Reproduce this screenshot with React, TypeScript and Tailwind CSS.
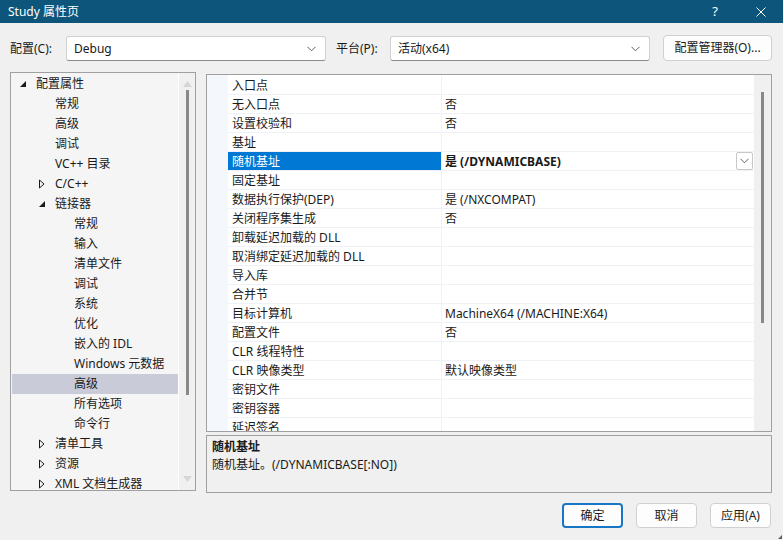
import React from "react";

const FONT = '"Noto Sans", "Noto Sans CJK SC", sans-serif';

type TreeItem = { label: string; level: number; arrow?: "open" | "closed"; selected?: boolean };

const tree: TreeItem[] = [
  { label: "配置属性", level: 0, arrow: "open" },
  { label: "常规", level: 1 },
  { label: "高级", level: 1 },
  { label: "调试", level: 1 },
  { label: "VC++ 目录", level: 1 },
  { label: "C/C++", level: 1, arrow: "closed" },
  { label: "链接器", level: 1, arrow: "open" },
  { label: "常规", level: 2 },
  { label: "输入", level: 2 },
  { label: "清单文件", level: 2 },
  { label: "调试", level: 2 },
  { label: "系统", level: 2 },
  { label: "优化", level: 2 },
  { label: "嵌入的 IDL", level: 2 },
  { label: "Windows 元数据", level: 2 },
  { label: "高级", level: 2, selected: true },
  { label: "所有选项", level: 2 },
  { label: "命令行", level: 2 },
  { label: "清单工具", level: 1, arrow: "closed" },
  { label: "资源", level: 1, arrow: "closed" },
  { label: "XML 文档生成器", level: 1, arrow: "closed" },
];

const rows: [string, string][] = [
  ["入口点", ""],
  ["无入口点", "否"],
  ["设置校验和", "否"],
  ["基址", ""],
  ["随机基址", "是 (/DYNAMICBASE)"],
  ["固定基址", ""],
  ["数据执行保护(DEP)", "是 (/NXCOMPAT)"],
  ["关闭程序集生成", "否"],
  ["卸载延迟加载的 DLL", ""],
  ["取消绑定延迟加载的 DLL", ""],
  ["导入库", ""],
  ["合并节", ""],
  ["目标计算机", "MachineX64 (/MACHINE:X64)"],
  ["配置文件", "否"],
  ["CLR 线程特性", ""],
  ["CLR 映像类型", "默认映像类型"],
  ["密钥文件", ""],
  ["密钥容器", ""],
  ["延迟签名", ""],
];

function Chevron({ className = "" }: { className?: string }) {
  return (
    <svg width="9" height="6" viewBox="0 0 9 6" className={className}>
      <path d="M0.5 0.8 L4.5 4.8 L8.5 0.8" fill="none" stroke="#606060" strokeWidth="1" />
    </svg>
  );
}

function Arrow({ type }: { type?: "open" | "closed" }) {
  if (type === "open")
    return (
      <svg width="6" height="6" viewBox="0 0 6 6">
        <polygon points="6,0 6,6 0,6" fill="#1a1a1a" />
      </svg>
    );
  if (type === "closed")
    return (
      <svg width="6" height="10" viewBox="0 0 6 10">
        <polygon points="0.5,1 5,5 0.5,9" fill="none" stroke="#1a1a1a" strokeWidth="1" />
      </svg>
    );
  return null;
}

function Combo({ text, width }: { text: string; width: string }) {
  return (
    <div
      className={`${width} h-[25px] bg-white border border-[#d1d1d1] border-b-[#8a8a8a] rounded-[3px] flex items-center pl-[7px] pr-[9px] justify-between`}
    >
      <span className="text-[12px] text-[#1a1a1a]">{text}</span>
      <Chevron />
    </div>
  );
}

function Btn({ text, primary }: { text: string; primary?: boolean }) {
  return (
    <div
      className={`w-[61px] h-[25px] rounded-[4px] bg-[#fdfdfd] flex items-center justify-center text-[12px] text-[#1a1a1a] ${
        primary ? "border-2 border-[#1975c5]" : "border border-[#d0d0d0]"
      }`}
    >
      {text}
    </div>
  );
}

export default function App() {
  return (
    <div
      className="w-[783px] h-[540px] bg-[#f0f0f0] flex flex-col overflow-hidden relative"
      style={{ fontFamily: FONT }}
    >
      {/* Title bar */}
      <div className="h-[23px] bg-[#0e557c] flex items-center pl-[8px] text-white text-[12px] shrink-0">
        <span className="flex-1">Study 属性页</span>
        <span className="w-[12px] text-center mr-[35px] text-[13px]">?</span>
        <svg width="10" height="10" viewBox="0 0 10 10" className="mr-[17px]">
          <path d="M0.5 0.5 L9.5 9.5 M9.5 0.5 L0.5 9.5" stroke="white" strokeWidth="1" />
        </svg>
      </div>

      {/* Config row */}
      <div className="h-[50px] shrink-0 flex items-start pt-[13px] pl-[10px] text-[12px] text-[#1a1a1a]">
        <span className="w-[56px] h-[25px] flex items-center">配置(C):</span>
        <Combo text="Debug" width="w-[260px]" />
        <span className="ml-[10px] w-[54px] h-[25px] flex items-center">平台(P):</span>
        <Combo text="活动(x64)" width="w-[260px]" />
        <div className="ml-[13px] w-[109px] h-[26px] -mt-[1px] bg-[#fdfdfd] border border-[#d0d0d0] rounded-[4px] flex items-center justify-center">
          配置管理器(O)...
        </div>
      </div>

      {/* Main */}
      <div className="flex h-[420px] shrink-0 pl-[10px]">
        {/* Tree */}
        <div className="w-[186px] h-[419px] -mt-[1px] border border-[#a0a0a0] bg-[#f5f5f5] flex overflow-hidden">
          <div className="w-[167px] pt-[1px] pl-[1px] overflow-hidden">
            {tree.map((t, i) => (
              <div
                key={i}
                className={`h-[20px] flex items-center text-[12px] text-[#1a1a1a] whitespace-nowrap ${
                  t.selected ? "bg-[#cacbd8]" : ""
                }`}
              >
                <div
                  className="flex items-center justify-center w-[14px] shrink-0"
                  style={{ marginLeft: 4 + t.level * 19 }}
                >
                  <Arrow type={t.arrow} />
                </div>
                <span className="ml-[6px]">{t.label}</span>
              </div>
            ))}
          </div>
          <div className="w-[1px] bg-white" />
          <div className="flex-1 bg-[#f0f0f0] flex flex-col items-center relative">
            <svg width="9" height="6" viewBox="0 0 9 6" className="mt-[8px]">
              <polygon points="0,6 4.5,0 9,6" fill="#d6d6d6" />
            </svg>
            <div className="w-[3px] h-[305px] bg-[#898989] mt-[3px] ml-[1px]" />
            <div className="flex-1" />
            <svg width="9" height="6" viewBox="0 0 9 6" className="mb-[8px]">
              <polygon points="0,0 4.5,6 9,0" fill="#d6d6d6" />
            </svg>
          </div>
        </div>

        {/* Right */}
        <div className="ml-[10px] w-[566px] flex flex-col">
          <div className="mt-[1px] h-[358px] border border-[#a0a0a0] bg-white flex overflow-hidden">
            <div className="w-[21px] bg-[#f4f7fb] shrink-0" />
            <div className="flex-1 flex flex-col overflow-hidden pt-[1px]">
              {rows.map(([n, v], i) => {
                const sel = i === 4;
                return (
                  <div key={i} className="h-[19px] shrink-0 flex border-b border-[#eef2f7] text-[12px]">
                    <div
                      className={`w-[214px] shrink-0 flex items-center pl-[4px] pt-[1px] border-r border-[#eef2f7] whitespace-nowrap ${
                        sel ? "bg-[#0078d4] text-white" : "text-[#1a1a1a]"
                      }`}
                    >
                      {n}
                    </div>
                    <div
                      className={`flex-1 flex items-center pl-[3px] whitespace-nowrap text-[#1a1a1a] ${
                        sel ? "font-bold" : ""
                      }`}
                    >
                      <span className="flex-1 pt-[1px]">{v}</span>
                      {sel && (
                        <div className="w-[17px] h-[18px] border border-[#c8c8c8] rounded-[2px] bg-white flex items-center justify-center mr-[1px]">
                          <Chevron />
                        </div>
                      )}
                    </div>
                  </div>
                );
              })}
            </div>
            <div className="w-[17px] shrink-0 bg-[#f0f0f0] flex justify-center">
              <div className="w-[3px] h-[231px] bg-[#898989] mt-[17px]" />
            </div>
          </div>
          <div className="mt-[3px] h-[58px] border border-[#a0a0a0] bg-[#f0f0f0] px-[5px] pt-[2px] text-[12px] text-[#1a1a1a] leading-[18px]">
            <div className="font-bold">随机基址</div>
            <div>随机基址。(/DYNAMICBASE[:NO])</div>
          </div>
        </div>
      </div>

      {/* Buttons */}
      <div className="flex justify-end gap-[13px] pr-[12px] pt-[10px]">
        <Btn text="确定" primary />
        <Btn text="取消" />
        <Btn text="应用(A)" />
      </div>

      {/* resize grip */}
      <svg width="4" height="4" viewBox="0 0 4 4" className="absolute right-[1px] bottom-[1px]">
        <polygon points="4,0 4,4 0,4" fill="#606060" />
      </svg>
    </div>
  );
}
